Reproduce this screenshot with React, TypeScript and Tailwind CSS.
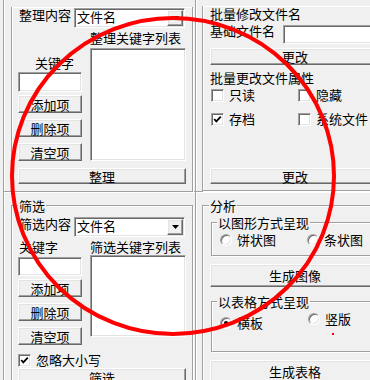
import React from 'react';

const sunken =
  'bg-white border border-t-[#a0a0a0] border-l-[#a0a0a0] border-b-white border-r-white shadow-[inset_1px_1px_0_#696969,inset_-1px_-1px_0_#e3e3e3] p-px';
const raised =
  'flex items-center justify-center bg-[#f0f0f0] border border-t-white border-l-white border-b-[#696969] border-r-[#696969] shadow-[inset_-1px_-1px_0_#a0a0a0,inset_1px_1px_0_#e3e3e3]';
const etched = 'border-[#a0a0a0] shadow-[inset_1px_1px_0_#fff,1px_1px_0_#fff]';

function Button({ label, className = '' }: { label: string; className?: string }) {
  return <div className={`${raised} ${className}`}>{label}</div>;
}

function Combo({ className = '' }: { className?: string }) {
  return (
    <div className={`h-[20px] flex items-stretch ${sunken} ${className}`}>
      <span className="flex-1 pl-px leading-[14px]">文件名</span>
      <div className={`w-[16px] ${raised}`}>
        <svg width="7" height="4" viewBox="0 0 7 4">
          <path d="M0 0H7L3.5 4Z" fill="#000" />
        </svg>
      </div>
    </div>
  );
}

function Check({ checked, label }: { checked?: boolean; label: string }) {
  return (
    <div className="flex items-start">
      <div className="w-[13px] h-[13px] shrink-0 bg-white border border-t-[#a0a0a0] border-l-[#a0a0a0] border-b-white border-r-white shadow-[inset_1px_1px_0_#696969,inset_-1px_-1px_0_#e3e3e3]">
        {checked && (
          <svg width="11" height="11" viewBox="0 0 11 11">
            <path d="M2.2 5 L4.3 7.4 L8.8 2.6" fill="none" stroke="#000" strokeWidth="1.8" />
          </svg>
        )}
      </div>
      <span className="ml-[5px] -mt-[2px]">{label}</span>
    </div>
  );
}

function Radio({ checked, label, className = '' }: { checked?: boolean; label: string; className?: string }) {
  return (
    <div className={`flex items-start ${className}`}>
      <div className="w-[12px] h-[12px] shrink-0 rounded-full bg-white border border-t-[#a0a0a0] border-l-[#a0a0a0] border-b-white border-r-white shadow-[inset_1px_1px_0_#696969,inset_-1px_-1px_0_#e3e3e3] flex items-center justify-center">
        {checked && <div className="w-[4px] h-[4px] rounded-full bg-black" />}
      </div>
      <span className="ml-[5px] -mt-[2px]">{label}</span>
    </div>
  );
}

function Caption({ text, className = '' }: { text: string; className?: string }) {
  return <span className={`absolute px-px bg-[#f0f0f0] ${className}`}>{text}</span>;
}

export default function App() {
  return (
    <div className="relative w-[370px] h-[380px] overflow-hidden bg-[#f0f0f0] text-black text-[13px] leading-[15px] whitespace-nowrap font-['Noto_Sans_CJK_SC','Noto_Sans',sans-serif]">
      <div className="flex h-full">
        {/* left column */}
        <div className="ml-[3px] w-[192px] shrink-0 flex flex-col border-l border-[#a0a0a0] shadow-[inset_1px_0_0_#fff]">
          {/* 整理 */}
          <div className="h-[192px] shrink-0 border-b border-[#a0a0a0] shadow-[0_1px_0_#fff]">
            <div className={`ml-[7px] w-[182px] h-[185px] border-l border-r border-b ${etched}`}>
              <div className="mt-[7px] flex items-start">
                <span className="ml-[7px] w-[55px]">整理内容</span>
                <Combo className="mt-px w-[111px]" />
              </div>
              <div className="flex items-start">
                <div className="ml-[6px] w-[64px] flex flex-col">
                  <span className="mt-[27px] pl-[17px]">关键字</span>
                  <div className={`mt-[2px] h-[20px] ${sunken}`} />
                  <Button label="添加项" className="mt-[3px] h-[18px]" />
                  <Button label="删除项" className="mt-[6px] h-[18px]" />
                  <Button label="清空项" className="mt-[6px] h-[18px]" />
                </div>
                <div className="ml-[8px] w-[96px] flex flex-col">
                  <span className="mt-[2px]">整理关键字列表</span>
                  <div className={`mt-[3px] h-[113px] ${sunken}`} />
                </div>
              </div>
              <Button label="整理" className="mt-[7px] ml-[6px] w-[168px] h-[16px]" />
            </div>
          </div>

          {/* 筛选 */}
          <div className="flex-1">
            <div className={`relative mt-[13px] ml-[7px] w-[182px] h-[200px] border-t border-l border-r ${etched}`}>
              <Caption text="筛选" className="left-[6px] -top-[8px]" />
              <div className="mt-[10px] flex items-start">
                <span className="ml-[7px] w-[55px]">筛选内容</span>
                <Combo className="mt-px w-[111px]" />
              </div>
              <div className="flex items-start">
                <div className="ml-[6px] w-[64px] flex flex-col">
                  <span className="mt-[2px] pl-px">关键字</span>
                  <div className={`mt-[3px] h-[19px] ${sunken}`} />
                  <Button label="添加项" className="mt-[3px] h-[18px]" />
                  <Button label="删除项" className="mt-[6px] h-[18px]" />
                  <Button label="清空项" className="mt-[6px] h-[18px]" />
                </div>
                <div className="ml-[8px] w-[96px] flex flex-col">
                  <span className="mt-[2px]">筛选关键字列表</span>
                  <div className={`mt-px h-[82px] ${sunken}`} />
                </div>
              </div>
              <div className="mt-[9px] ml-[6px]">
                <Check checked label="忽略大小写" />
              </div>
              <Button label="筛选" className="mt-px ml-[6px] w-[168px] h-[18px]" />
            </div>
          </div>
        </div>

        {/* right column */}
        <div className="w-[175px] shrink-0 flex flex-col border-l border-[#a0a0a0] shadow-[inset_1px_0_0_#fff]">
          {/* 批量修改 */}
          <div className="h-[192px] shrink-0 border-b border-[#a0a0a0] shadow-[0_1px_0_#fff]">
            <div className={`ml-[6px] w-[200px] h-[185px] border-l border-b ${etched}`}>
              <div className="mt-[6px] ml-[7px]">批量修改文件名</div>
              <div className="mt-[2px] flex items-start">
                <span className="ml-[7px] w-[73px]">基础文件名</span>
                <div className={`mt-[2px] w-[120px] h-[19px] ${sunken}`} />
              </div>
              <Button label="更改" className="mt-[4px] ml-[7px] w-[170px] h-[17px]" />
              <div className="mt-[5px] ml-[7px]">批量更改文件属性</div>
              <div className="mt-[4px] ml-[8px] grid grid-cols-[87px_87px] gap-y-[11px]">
                <Check label="只读" />
                <Check label="隐藏" />
                <Check checked label="存档" />
                <Check label="系统文件" />
              </div>
              <Button label="更改" className="mt-[42px] ml-[7px] w-[170px] h-[16px]" />
            </div>
          </div>

          {/* 分析 */}
          <div className="flex-1">
            <div className={`relative mt-[13px] ml-[6px] w-[200px] h-[200px] border-t border-l ${etched}`}>
              <Caption text="分析" className="left-[6px] -top-[8px]" />
              <div className={`relative mt-[16px] ml-[8px] w-[200px] h-[34px] border-t border-l border-b ${etched}`}>
                <Caption text="以图形方式呈现" className="left-[5px] -top-[8px]" />
                <div className="mt-[11px] flex items-start">
                  <Radio label="饼状图" className="ml-[8px] w-[87px]" />
                  <Radio label="条状图" />
                </div>
              </div>
              <Button label="生成图像" className="mt-[8px] ml-[7px] w-[170px] h-[23px]" />
              <div className={`relative mt-[14px] ml-[8px] w-[200px] h-[51px] border-t border-l border-b ${etched}`}>
                <Caption text="以表格方式呈现" className="left-[5px] -top-[8px]" />
                <div className="flex items-start">
                  <Radio checked label="横板" className="mt-[15px] ml-[8px] w-[88px]" />
                  <Radio label="竖版" className="mt-[11px]" />
                </div>
              </div>
              <Button label="生成表格" className="mt-[8px] ml-[7px] w-[170px] h-[23px]" />
            </div>
          </div>
        </div>
      </div>

      {/* hand-drawn red annotation */}
      <svg className="absolute inset-0 pointer-events-none" width="370" height="380" viewBox="0 0 370 380">
        <ellipse cx="173" cy="176" rx="161" ry="158" fill="none" stroke="#ff0000" strokeWidth="4" />
        <rect x="332" y="333" width="2" height="2" fill="#ff0000" />
      </svg>
    </div>
  );
}
